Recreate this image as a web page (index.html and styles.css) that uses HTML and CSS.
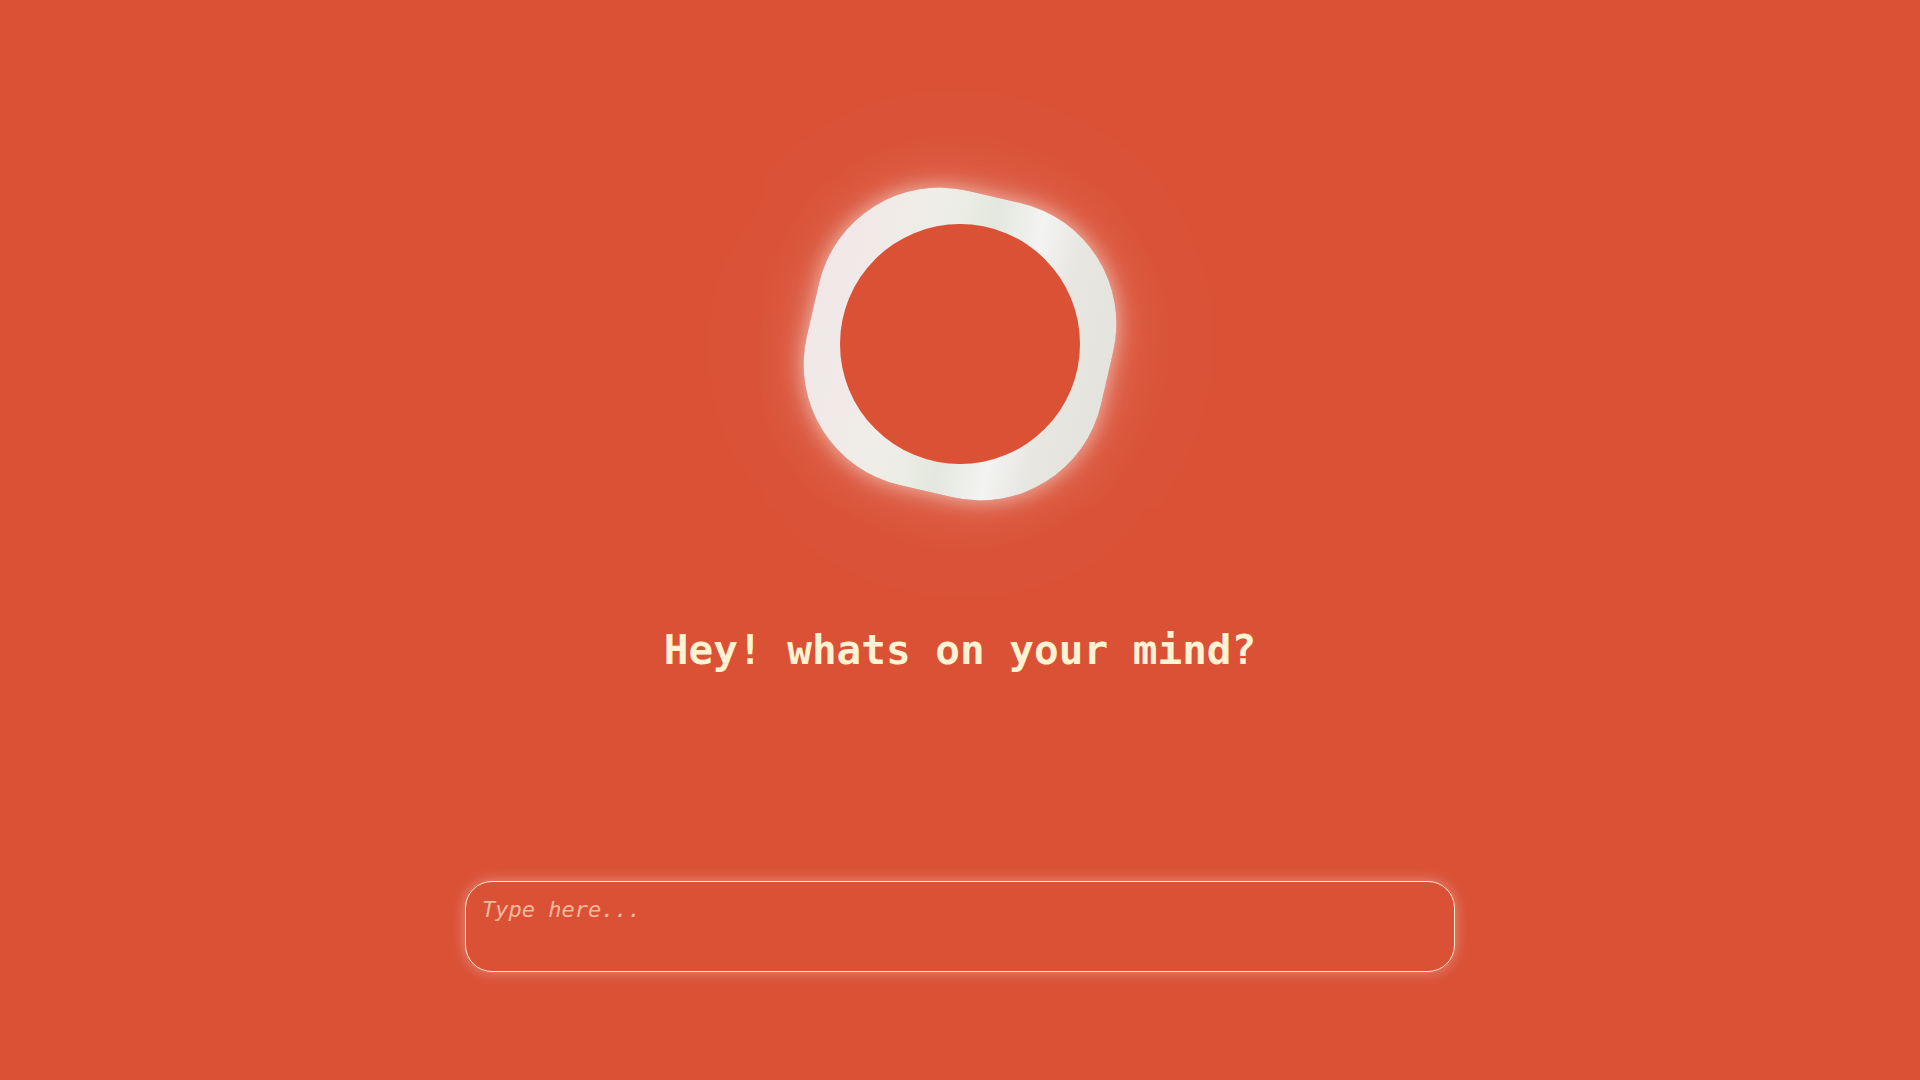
FILE: index.html
```html
<!DOCTYPE html>
<html lang="en">
<head>
<meta charset="utf-8">
<title>Hey! whats on your mind?</title>
<link rel="stylesheet" href="styles.css">
</head>
<body>
<main class="page">
  <div class="orb">
    <div class="orb-ring"></div>
    <div class="orb-core"></div>
  </div>
  <h1 class="title">Hey! whats on your mind?</h1>
  <textarea class="prompt" placeholder="Type here..."></textarea>
</main>
</body>
</html>
```

FILE: styles.css
```css
html, body {
  margin: 0;
  padding: 0;
  height: 100%;
}

body {
  background: #da5136;
  font-family: "DejaVu Sans Mono", "Liberation Mono", monospace;
  overflow: hidden;
}

.page {
  display: flex;
  flex-direction: column;
  align-items: center;
  padding-top: 193px;
}

.orb {
  display: grid;
  width: 302px;
  height: 302px;
  place-items: center;
}

.orb-ring,
.orb-core {
  grid-area: 1 / 1;
}

.orb-ring {
  width: 302px;
  height: 302px;
  border-radius: 41%;
  transform: rotate(13deg);
  background: linear-gradient(90deg,
    #f1e7e7 0%,
    #efede8 30%,
    #ebede5 42%,
    #e4e7de 52%,
    #f3f3f2 68%,
    #e7e6e1 82%,
    #e4e3de 100%);
  box-shadow:
    0 0 20px rgba(255, 255, 255, 0.55),
    0 0 55px rgba(255, 255, 255, 0.2),
    0 0 160px rgba(255, 255, 255, 0.1);
}

.orb-core {
  position: relative;
  z-index: 1;
  width: 240px;
  height: 240px;
  border-radius: 50%;
  background: #da5136;
}

.title {
  margin: 131px 0 0;
  font-size: 41px;
  font-weight: bold;
  line-height: normal;
  color: #fff3d4;
}

.prompt {
  box-sizing: border-box;
  width: 990px;
  height: 91px;
  margin-top: 207px;
  padding: 15px 16px;
  border: 1px solid #fdeed2;
  border-radius: 27px;
  background: transparent;
  box-shadow: 0 0 14px rgba(255, 255, 255, 0.35);
  font-family: "DejaVu Sans Mono", "Liberation Mono", monospace;
  font-size: 22px;
  color: #fff3d4;
  resize: none;
  outline: none;
}

.prompt::placeholder {
  font-style: italic;
  color: #f4b99b;
  opacity: 1;
}
```
